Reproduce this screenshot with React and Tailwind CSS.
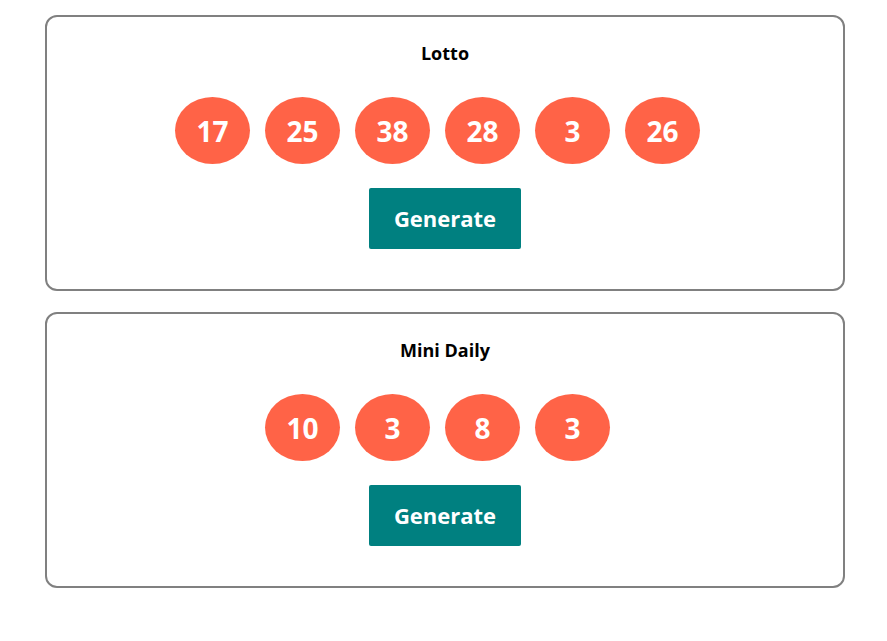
import React, { useState } from 'react'

const games = [
    { name: 'Lotto', numbers: [17, 25, 38, 28, 3, 26] },
    { name: 'Mini Daily', numbers: [10, 3, 8, 3] },
]

const Ball = ({ value }) => (
    <div className="w-[75px] h-[67px] mr-[15px] rounded-[50%] bg-[#ff6347] flex items-center justify-center text-white text-[28px] font-bold">
        {value}
    </div>
)

const LotteryCard = ({ name, numbers }) => {
    const [nums] = useState(numbers)

    return (
        <div className="w-[800px] h-[276px] ml-[45px] border-2 border-[#808080] rounded-[12px] flex flex-col items-center pt-[24px]">
            <h2 className="text-[18px] leading-[24px] font-bold text-black">{name}</h2>
            <div className="flex mt-[32px]">
                {nums.map((n, i) => (
                    <Ball key={i} value={n} />
                ))}
            </div>
            <button className="mt-[24px] w-[152px] h-[61px] bg-[#008080] text-white text-[22px] font-bold rounded-[2px]">
                Generate
            </button>
        </div>
    )
}

export default function App() {
    return (
        <div className="w-full min-h-screen bg-white pt-[15px] flex flex-col gap-[21px]" style={{ fontFamily: '"Open Sans", sans-serif' }}>
            {games.map((g) => (
                <LotteryCard key={g.name} name={g.name} numbers={g.numbers} />
            ))}
        </div>
    )
}
